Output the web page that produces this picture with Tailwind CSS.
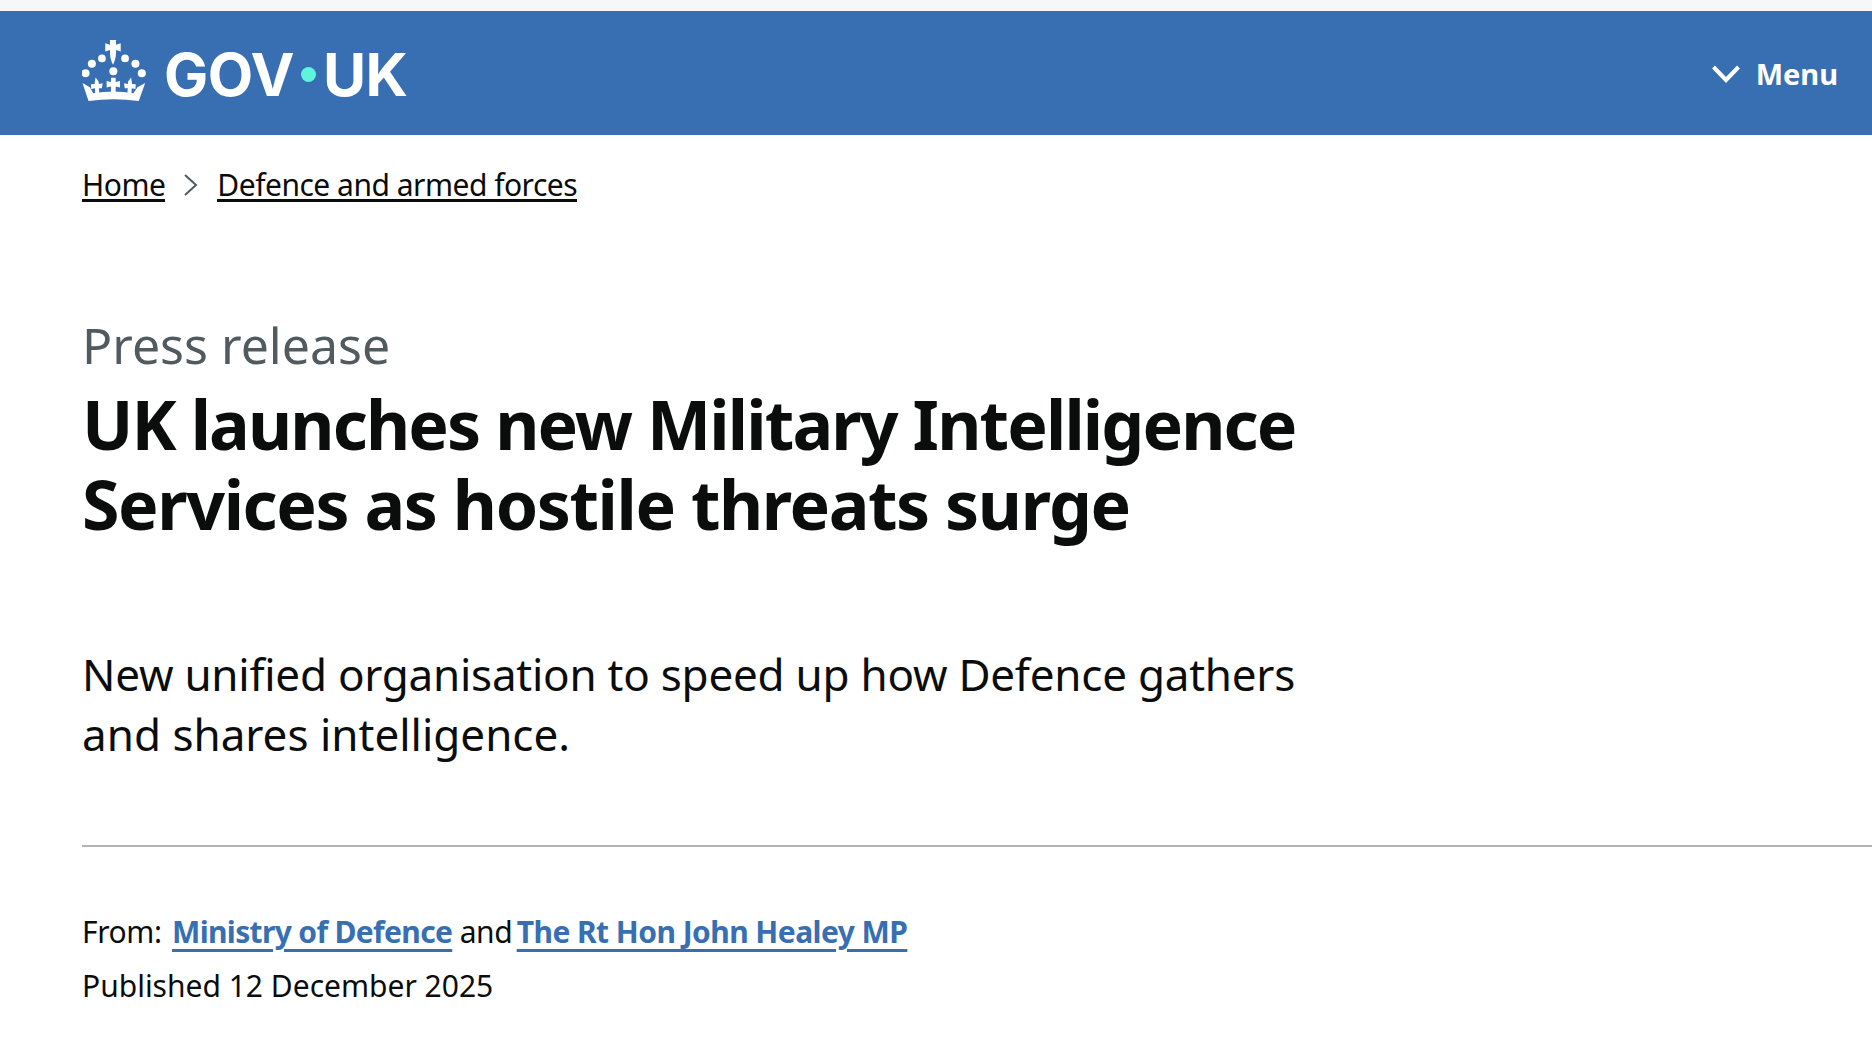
<!DOCTYPE html>
<html lang="en">
<head>
    <meta charset="UTF-8">
    <title>UK launches new Military Intelligence Services as hostile threats surge - GOV.UK</title>
    <script src="https://cdn.jsdelivr.net/npm/@tailwindcss/browser@4"></script>
</head>
<body class="bg-white h-[1044px] overflow-hidden font-['Noto_Sans',sans-serif] text-[#0b0c0c]">
    <div class="h-[11px] bg-[#f4f8fb]"></div>
    <header class="h-[124px] bg-[#376fb2] flex items-center justify-between pl-[82px] pr-[34px] text-white">
        <a class="flex items-center gap-[18px]" href="#">
            <!-- crown -->
            <svg class="w-[64px] h-[62px] mb-[5px]" viewBox="37 25 190 185" fill="#fff">
                <path d="M120 25h18v14l14-4v24l-14-4v8c0 14-4 26-9 36-5-10-9-22-9-36v-8l-14 4V35l14 4z"/>
                <circle cx="96" cy="80" r="11.500"/><circle cx="165" cy="80" r="11.500"/>
                <circle cx="66" cy="96" r="12"/><circle cx="196" cy="96" r="12"/>
                <circle cx="47" cy="124" r="12"/><circle cx="215" cy="124" r="12"/>
                <circle cx="130" cy="118" r="12"/>
                <path d="M38 153l22 13 10 18q60-10 120 0l12-18 23-13-19 54q-76-10-150 0z"/>
                <path d="M123 138h14v12l13-3v20l-13-3v16h-14v-16l-13 3v-20l13 3z"/>
                <path d="M77 137l9 12 1 7 11-2-2 15-9 0 1 16-12 0-1-16-11 2-1-14 11-1 1-7z"/>
                <path d="M183 137l-9 12-1 7-11-2 2 15 9 0-1 16 12 0 1-16 11 2 1-14-11-1-1-7z"/>
            </svg>
            <span class="font-['Inter',sans-serif] font-bold text-[59px] leading-none tracking-[-0.5px] flex items-center mt-[3px]">GOV<span class="w-[15px] h-[15px] rounded-full bg-[#5ff5da] mx-[7px]"></span>UK</span>
        </a>
        <button class="flex items-center gap-[16px] font-bold text-[29px] leading-none">
            <svg class="w-[28px] h-[18px] mt-[2px]" viewBox="0 0 28 18" fill="none" stroke="#fff" stroke-width="4"><path d="M1.500 2l12.500 13 12.500-13"/></svg>
            Menu
        </button>
    </header>
    <main class="pl-[82px]">
        <nav class="flex items-center pt-[32px] text-[30px] tracking-[-0.5px]">
            <a href="#" class="border-b-[3px] border-[#0b0c0c] h-[35px] leading-[35px]">Home</a>
            <svg class="w-[16px] h-[24px] mx-[18px]" viewBox="0 0 16 24" fill="none" stroke="#505a5f" stroke-width="2"><path d="M2 2l11 10-11 10"/></svg>
            <a href="#" class="border-b-[3px] border-[#0b0c0c] h-[35px] leading-[35px]">Defence and armed forces</a>
        </nav>
        <p class="mt-[113px] text-[50px] leading-[60px] text-[#505a5f]">Press release</p>
        <h1 class="mt-[9px] w-[1300px] text-[68px] leading-[80px] font-bold"><span class="tracking-[-1.85px]">UK launches new Military Intelligence</span><br><span class="tracking-[-1.4px]">Services as hostile threats surge</span></h1>
        <p class="mt-[100px] w-[1300px] text-[44px] leading-[60px]"><span class="tracking-[-0.25px]">New unified organisation to speed up how Defence gathers</span><br>and shares intelligence.</p>
        <div class="mt-[81px] border-t-2 border-[#b1b4b6]"></div>
        <div class="mt-[65px] text-[30px] leading-[40px]">
            <p class="tracking-[-0.4px]">From: <a href="#" class="ml-[3px] font-bold tracking-[-0.65px] text-[#376fb2] underline underline-offset-[6px] decoration-[3px]">Ministry of Defence</a> and <a href="#" class="-ml-[3px] font-bold tracking-[-0.55px] text-[#376fb2] underline underline-offset-[6px] decoration-[3px]">The Rt Hon John Healey MP</a></p>
            <p class="mt-[14px]">Published 12 December 2025</p>
        </div>
    </main>
</body>
</html>
